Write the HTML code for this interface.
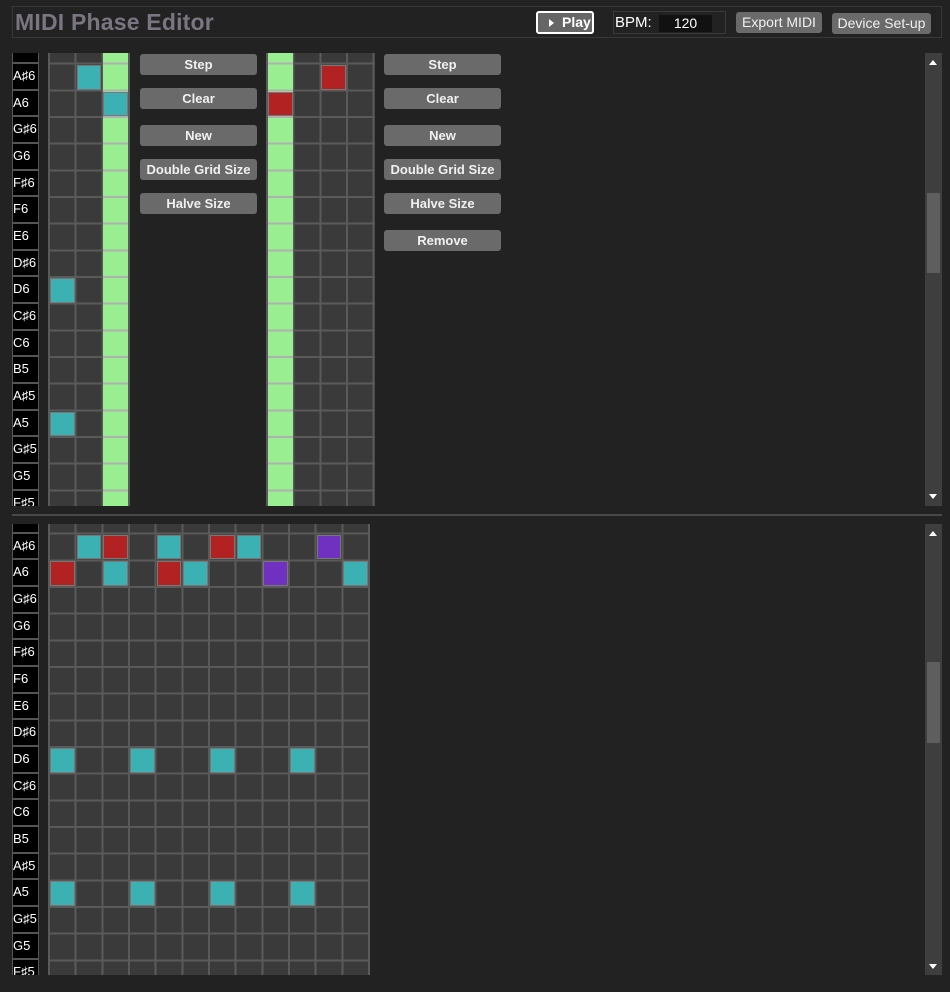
<!DOCTYPE html>
<html><head><meta charset="utf-8"><style>
*{box-sizing:border-box;margin:0;padding:0}
body{width:950px;height:992px;background:#222;font-family:"Liberation Sans",sans-serif;position:relative;overflow:hidden}
.hdr{position:absolute;left:12px;top:6px;width:930px;height:32px;border:1px solid #383838}
.title{position:absolute;left:2px;top:2px;font-size:23px;font-weight:bold;color:#7a7580;letter-spacing:0.2px}
.btn{position:absolute;background:#6a6a6a;color:#f0f0f0;font-weight:bold;font-size:13px;text-align:center;border-radius:3px}
.play{position:absolute;left:536px;top:11px;width:58px;height:23px;border:2px solid #fff;border-radius:3px;background:#666;color:#fff;font-size:14px;font-weight:bold;line-height:19px;padding-left:10px}
.play:before{content:"";position:absolute;left:11px;top:6px;border-left:5px solid #fff;border-top:4px solid transparent;border-bottom:4px solid transparent}
.play span{margin-left:14px}
.bpm{position:absolute;left:613px;top:11px;width:113px;height:23px;border:1px solid #3a3a3a;color:#fff;font-size:15px;line-height:21px;padding-left:1px}
.bpm .in{position:absolute;left:45px;top:3px;width:53px;height:17px;background:#111;font-size:14px;line-height:17px;text-align:center}
.pane{position:absolute;left:12px;width:913px;overflow:hidden}
.sb{position:absolute;left:925px;width:17px;background:#3e3e3e}
.thumb{position:absolute;left:927px;width:13px;background:#5e5e5e}
.arr{position:absolute;left:929px;width:0;height:0;border-left:4px solid transparent;border-right:4px solid transparent}
.labels{position:absolute;left:0;width:27px}
.lab{position:absolute;left:0;width:27px;height:26.67px;background:#555;}
.lab div{position:absolute;left:1px;right:1px;top:1px;bottom:1px;background:#000;color:#fff;font-size:13px;line-height:24px;padding-left:0}
.grid{position:absolute;background-color:#3a3a3a;
background-image:repeating-linear-gradient(to right,#5a5a5a 0,#5a5a5a 2px,transparent 2px,transparent 26.67px),repeating-linear-gradient(to bottom,#5a5a5a 0,#5a5a5a 2px,transparent 2px,transparent 26.67px)}
.c{position:absolute;width:24.67px;height:24.67px;left:calc(var(--x)*26.67px + 2px);top:calc(var(--y)*26.67px + 2px);border:1px solid #777}
.t{background:#3cb1b3}.r{background:#b22222}.p{background:#7030c0}
.gcol{position:absolute;top:0;height:480px;width:24.67px;background-color:#98ee90;
background-image:repeating-linear-gradient(to bottom,#b0b0b0 0,#b0b0b0 2px,transparent 2px,transparent 26.67px);background-position:0 0}
</style></head><body>
<div class="hdr"><div class="title">MIDI Phase Editor</div></div>
<div class="play"><span>Play</span></div>
<div class="bpm">BPM:<div class="in">120</div></div>
<div class="btn" style="left:736px;top:12px;width:86px;height:21px;line-height:20px;font-size:14px;font-weight:normal">Export MIDI</div>
<div class="btn" style="left:832px;top:13px;width:99px;height:21px;line-height:20px;font-size:14px;font-weight:normal">Device Set-up</div>

<!-- top pane -->
<div class="pane" style="top:53px;height:453px">
 <div class="labels" style="top:-16.7px">
  <div class="lab" style="top:0"><div>B6</div></div>
  <div class="lab" style="top:26.67px"><div>A♯6</div></div>
  <div class="lab" style="top:53.33px"><div>A6</div></div>
  <div class="lab" style="top:80px"><div>G♯6</div></div>
  <div class="lab" style="top:106.67px"><div>G6</div></div>
  <div class="lab" style="top:133.33px"><div>F♯6</div></div>
  <div class="lab" style="top:160px"><div>F6</div></div>
  <div class="lab" style="top:186.67px"><div>E6</div></div>
  <div class="lab" style="top:213.33px"><div>D♯6</div></div>
  <div class="lab" style="top:240px"><div>D6</div></div>
  <div class="lab" style="top:266.67px"><div>C♯6</div></div>
  <div class="lab" style="top:293.33px"><div>C6</div></div>
  <div class="lab" style="top:320px"><div>B5</div></div>
  <div class="lab" style="top:346.67px"><div>A♯5</div></div>
  <div class="lab" style="top:373.33px"><div>A5</div></div>
  <div class="lab" style="top:400px"><div>G♯5</div></div>
  <div class="lab" style="top:426.67px"><div>G5</div></div>
  <div class="lab" style="top:453.33px"><div>F♯5</div></div>
 </div>
 <div class="grid" style="left:36px;top:-16.7px;width:82px;height:480px">
  <div class="gcol" style="left:55.34px"></div>
  <div class="c t" style="--x:0;--y:9"></div>
  <div class="c t" style="--x:0;--y:14"></div>
  <div class="c t" style="--x:1;--y:1"></div>
  <div class="c t" style="--x:2;--y:2"></div>
 </div>
 <div class="grid" style="left:254px;top:-16.7px;width:109px;height:480px">
  <div class="gcol" style="left:2px"></div>
  <div class="c r" style="--x:0;--y:2"></div>
  <div class="c r" style="--x:2;--y:1"></div>
 </div>
 <div class="btn" style="left:128px;top:1px;width:117px;height:21px;line-height:21px">Step</div>
 <div class="btn" style="left:128px;top:35px;width:117px;height:21px;line-height:21px">Clear</div>
 <div class="btn" style="left:128px;top:72px;width:117px;height:21px;line-height:21px">New</div>
 <div class="btn" style="left:128px;top:106px;width:117px;height:21px;line-height:21px">Double Grid Size</div>
 <div class="btn" style="left:128px;top:140px;width:117px;height:21px;line-height:21px">Halve Size</div>
 <div class="btn" style="left:372px;top:1px;width:117px;height:21px;line-height:21px">Step</div>
 <div class="btn" style="left:372px;top:35px;width:117px;height:21px;line-height:21px">Clear</div>
 <div class="btn" style="left:372px;top:72px;width:117px;height:21px;line-height:21px">New</div>
 <div class="btn" style="left:372px;top:106px;width:117px;height:21px;line-height:21px">Double Grid Size</div>
 <div class="btn" style="left:372px;top:140px;width:117px;height:21px;line-height:21px">Halve Size</div>
 <div class="btn" style="left:372px;top:177px;width:117px;height:21px;line-height:21px">Remove</div>
</div>
<div class="sb" style="top:53px;height:453px"></div>
<div class="thumb" style="top:193px;height:80px"></div>
<div class="arr" style="top:60px;border-bottom:5px solid #fff"></div>
<div class="arr" style="top:494px;border-top:5px solid #fff"></div>

<div style="position:absolute;left:12px;top:514px;width:930px;height:2px;background:#484848"></div>

<!-- bottom pane -->
<div class="pane" style="top:524px;height:451px">
 <div class="labels" style="top:-18px">
  <div class="lab" style="top:0"><div>B6</div></div>
  <div class="lab" style="top:26.67px"><div>A♯6</div></div>
  <div class="lab" style="top:53.33px"><div>A6</div></div>
  <div class="lab" style="top:80px"><div>G♯6</div></div>
  <div class="lab" style="top:106.67px"><div>G6</div></div>
  <div class="lab" style="top:133.33px"><div>F♯6</div></div>
  <div class="lab" style="top:160px"><div>F6</div></div>
  <div class="lab" style="top:186.67px"><div>E6</div></div>
  <div class="lab" style="top:213.33px"><div>D♯6</div></div>
  <div class="lab" style="top:240px"><div>D6</div></div>
  <div class="lab" style="top:266.67px"><div>C♯6</div></div>
  <div class="lab" style="top:293.33px"><div>C6</div></div>
  <div class="lab" style="top:320px"><div>B5</div></div>
  <div class="lab" style="top:346.67px"><div>A♯5</div></div>
  <div class="lab" style="top:373.33px"><div>A5</div></div>
  <div class="lab" style="top:400px"><div>G♯5</div></div>
  <div class="lab" style="top:426.67px"><div>G5</div></div>
  <div class="lab" style="top:453.33px"><div>F♯5</div></div>
 </div>
 <div class="grid" style="left:36px;top:-18px;width:322px;height:480px">
  <div class="c t" style="--x:1;--y:1"></div>
  <div class="c r" style="--x:2;--y:1"></div>
  <div class="c t" style="--x:4;--y:1"></div>
  <div class="c r" style="--x:6;--y:1"></div>
  <div class="c t" style="--x:7;--y:1"></div>
  <div class="c p" style="--x:10;--y:1"></div>
  <div class="c r" style="--x:0;--y:2"></div>
  <div class="c t" style="--x:2;--y:2"></div>
  <div class="c r" style="--x:4;--y:2"></div>
  <div class="c t" style="--x:5;--y:2"></div>
  <div class="c p" style="--x:8;--y:2"></div>
  <div class="c t" style="--x:11;--y:2"></div>
  <div class="c t" style="--x:0;--y:9"></div>
  <div class="c t" style="--x:3;--y:9"></div>
  <div class="c t" style="--x:6;--y:9"></div>
  <div class="c t" style="--x:9;--y:9"></div>
  <div class="c t" style="--x:0;--y:14"></div>
  <div class="c t" style="--x:3;--y:14"></div>
  <div class="c t" style="--x:6;--y:14"></div>
  <div class="c t" style="--x:9;--y:14"></div>
 </div>
</div>
<div class="sb" style="top:524px;height:451px"></div>
<div class="thumb" style="top:662px;height:81px"></div>
<div class="arr" style="top:531px;border-bottom:5px solid #fff"></div>
<div class="arr" style="top:964px;border-top:5px solid #fff"></div>
</body></html>
